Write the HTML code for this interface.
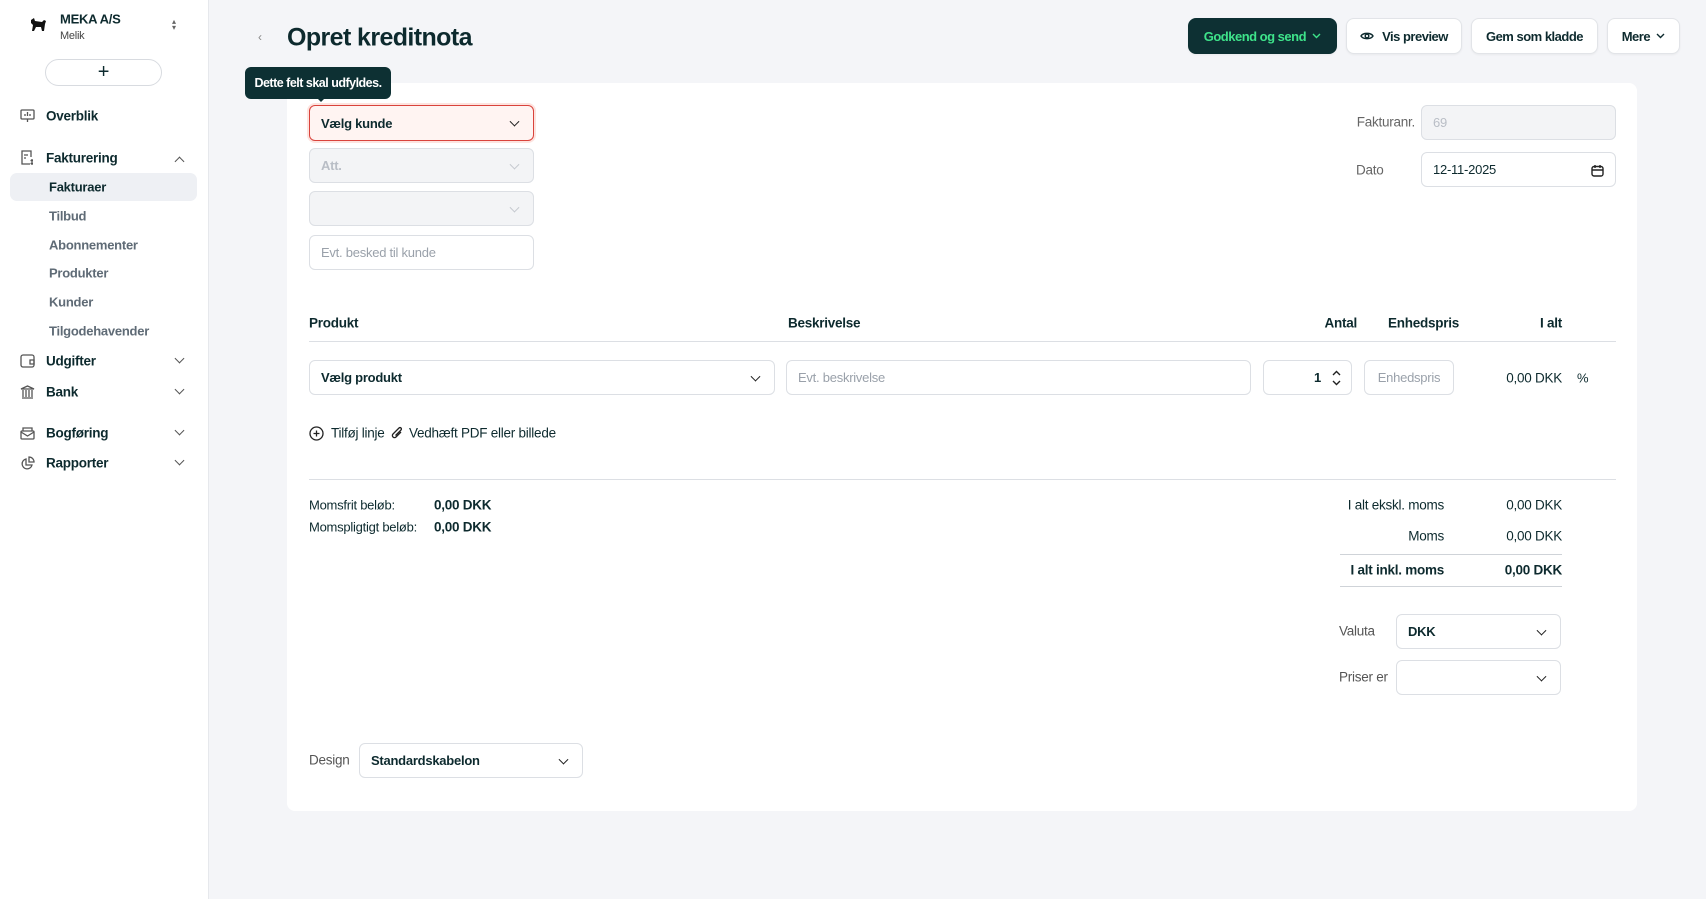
<!DOCTYPE html>
<html><head><meta charset="utf-8"><style>
*{box-sizing:border-box;margin:0;padding:0}
body{width:1706px;height:899px;background:#f4f5f8;font-family:"Liberation Sans",sans-serif;color:#0d2a2e;position:relative;overflow:hidden;font-size:13.5px;letter-spacing:-0.25px}
.a{position:absolute}
.side{position:absolute;left:0;top:0;width:209px;height:899px;background:#fff;border-right:1px solid #e6e8ec}
.nav{position:absolute;left:46px;font-weight:bold;font-size:13.5px;transform:translateY(-50%)}
.sub{position:absolute;left:49px;color:#5f6b76;font-weight:bold;font-size:13px;transform:translateY(-50%)}
.chev{position:absolute;left:176px;width:7px;height:7px;border-right:1.5px solid #555;border-bottom:1.5px solid #555;transform:rotate(45deg)}
.si{position:absolute;left:20px}
.card{position:absolute;left:287px;top:83px;width:1350px;height:728px;background:#fff;border-radius:8px}
.inp{position:absolute;border:1px solid #dcdfe4;border-radius:6px;background:#fff;display:flex;align-items:center;padding:0 11px;font-size:13px}
.dd::after{content:"";position:absolute;right:15px;top:50%;width:6px;height:6px;border-right:1.5px solid #222;border-bottom:1.5px solid #222;transform:translateY(-70%) rotate(45deg)}
.dis{background:#f3f4f6;color:#b9bec6}
.dis.dd::after{border-color:#c5c9cf}
.t{position:absolute;transform:translateY(-50%);white-space:nowrap}
.btn{position:absolute;top:18px;height:36px;border-radius:8px;background:#fff;border:1px solid #e2e4e8;display:flex;align-items:center;justify-content:center;font-weight:bold;font-size:13px;letter-spacing:-0.5px;box-shadow:0 1px 2px rgba(0,0,0,.05)}
</style></head><body>
<div class="side">
 <svg class="a" style="left:29px;top:17px" width="18" height="16" viewBox="0 0 18 16"><path d="M2 3 L5 1 L6 4 L13 5 L15 3 L17 4 L16 7 L15 14 L13 14 L12 10 L7 10 L5 14 L3 14 L4 8 L2 6 Z" fill="#111"/></svg>
 <div class="t" style="left:60px;top:19px;font-weight:bold;font-size:13px">MEKA A/S</div>
 <div class="t" style="left:60px;top:36px;font-size:11px;color:#444">Melik</div>
 <div class="t" style="left:172px;top:25px;font-size:8px;color:#666;line-height:6px">▴<br>▾</div>
 <div class="a" style="left:45px;top:59px;width:117px;height:27px;border:1px solid #d8dbe0;border-radius:14px;text-align:center;font-size:20px;line-height:24px">+</div>
 <svg class="si" style="top:109px" width="15" height="14" viewBox="0 0 15 14" fill="none" stroke="#555" stroke-width="1.3"><rect x="1" y="1" width="13" height="9" rx="1"/><path d="M5 7V5M7.5 7V3M10 7V5M7.5 10v3"/></svg>
 <div class="nav" style="top:116px">Overblik</div>
 <svg class="si" style="top:150px" width="15" height="16" viewBox="0 0 15 16" fill="none" stroke="#555" stroke-width="1.3"><path d="M10 14H2V1h9v6"/><path d="M4 5h4M4 8h2"/><path d="M12 9v6M10.5 10.5h2.5M10.5 13.5h2.5"/></svg>
 <div class="nav" style="top:158px">Fakturering</div>
 <div class="chev" style="top:158px;transform:rotate(-135deg)"></div>
 <div class="a" style="left:10px;top:173px;width:187px;height:28px;background:#eef0f4;border-radius:7px"></div>
 <div class="sub" style="top:187px;color:#0d2a2e">Fakturaer</div>
 <div class="sub" style="top:216px">Tilbud</div>
 <div class="sub" style="top:245px">Abonnementer</div>
 <div class="sub" style="top:273px">Produkter</div>
 <div class="sub" style="top:302px">Kunder</div>
 <div class="sub" style="top:331px">Tilgodehavender</div>
 <svg class="si" style="top:354px" width="15" height="14" viewBox="0 0 15 14" fill="none" stroke="#555" stroke-width="1.3"><rect x="1" y="1" width="13" height="12" rx="2"/><path d="M10 6h4v4h-4z"/></svg>
 <div class="nav" style="top:361px">Udgifter</div><div class="chev" style="top:355px"></div>
 <svg class="si" style="top:385px" width="15" height="14" viewBox="0 0 15 14" fill="none" stroke="#555" stroke-width="1.3"><path d="M1 4L7.5 1L14 4Z M2 13h11 M3 5v7M6 5v7M9 5v7M12 5v7"/></svg>
 <div class="nav" style="top:392px">Bank</div><div class="chev" style="top:386px"></div>
 <svg class="si" style="top:426px" width="15" height="14" viewBox="0 0 15 14" fill="none" stroke="#555" stroke-width="1.3"><rect x="1" y="5" width="13" height="8" rx="1"/><path d="M1 6l6.5 4L14 6M3 5V2h9v3"/></svg>
 <div class="nav" style="top:433px">Bogføring</div><div class="chev" style="top:427px"></div>
 <svg class="si" style="top:456px" width="15" height="15" viewBox="0 0 15 15" fill="none" stroke="#555" stroke-width="1.3"><path d="M6 3a5 5 0 1 0 6 6H6Z"/><path d="M9 1a5 5 0 0 1 5 5H9Z"/></svg>
 <div class="nav" style="top:463px">Rapporter</div><div class="chev" style="top:457px"></div>
</div>
<div class="t" style="left:258px;top:37px;color:#888;font-size:12px">‹</div>
<div class="t" style="left:287px;top:38px;font-size:25px;font-weight:bold;letter-spacing:-0.6px">Opret kreditnota</div>
<div class="btn" style="left:1188px;width:149px;background:#0d3033;border-color:#0d3033;color:#3ee38a">Godkend og send&nbsp;&nbsp;<svg width="9" height="6" viewBox="0 0 9 6"><path d="M1 1l3.5 3.5L8 1" fill="none" stroke="#3ee38a" stroke-width="1.4"/></svg></div>
<div class="btn" style="left:1346px;width:116px"><svg width="14" height="10" viewBox="0 0 14 10" style="margin-right:8px" fill="none" stroke="#0d2a2e" stroke-width="1.4"><path d="M1 5C3 1.5 11 1.5 13 5C11 8.5 3 8.5 1 5Z"/><circle cx="7" cy="5" r="1.8"/></svg>Vis preview</div>
<div class="btn" style="left:1471px;width:127px">Gem som kladde</div>
<div class="btn" style="left:1607px;width:73px">Mere&nbsp;&nbsp;<svg width="9" height="6" viewBox="0 0 9 6"><path d="M1 1l3.5 3.5L8 1" fill="none" stroke="#0d2a2e" stroke-width="1.4"/></svg></div>
<div class="card"></div>
<div class="a" style="left:245px;top:67px;width:146px;height:32px;background:#0d3033;border-radius:6px;color:#fff;font-size:12.5px;line-height:32px;text-align:center;font-weight:bold;letter-spacing:-.5px">Dette felt skal udfyldes.</div>
<div class="a" style="left:315px;top:96px;width:0;height:0;border:6px solid transparent;border-top-color:#0d3033"></div>
<div class="inp dd" style="left:309px;top:105px;width:225px;height:36px;border:1.5px solid #d9433c;background:#fff4f2;font-weight:bold;box-shadow:0 0 0 2px #fde3df">Vælg kunde</div>
<div class="inp dd dis" style="left:309px;top:148px;width:225px;height:35px;font-weight:bold">Att.</div>
<div class="inp dd dis" style="left:309px;top:191px;width:225px;height:35px"></div>
<div class="inp" style="left:309px;top:235px;width:225px;height:35px;color:#9aa1aa">Evt. besked til kunde</div>
<div class="t" style="right:291px;top:122px;color:#666">Fakturanr.</div>
<div class="inp dis" style="left:1421px;top:105px;width:195px;height:35px">69</div>
<div class="t" style="left:1356px;top:170px;color:#666">Dato</div>
<div class="inp" style="left:1421px;top:152px;width:195px;height:35px">12-11-2025<svg style="position:absolute;right:11px;top:11px" width="13" height="13" viewBox="0 0 13 13" fill="none" stroke="#222" stroke-width="1.4"><rect x="1" y="2.5" width="11" height="9.5" rx="2"/><path d="M4 1v3M9 1v3M1 6h11"/></svg></div>
<div class="t" style="left:309px;top:323px;font-weight:bold">Produkt</div>
<div class="t" style="left:788px;top:323px;font-weight:bold">Beskrivelse</div>
<div class="t" style="right:349px;top:323px;font-weight:bold">Antal</div>
<div class="t" style="left:1388px;top:323px;font-weight:bold">Enhedspris</div>
<div class="t" style="right:144px;top:323px;font-weight:bold">I alt</div>
<div class="a" style="left:309px;top:341px;width:1307px;height:1px;background:#dcdfe4"></div>
<div class="inp dd" style="left:309px;top:360px;width:466px;height:35px;font-weight:bold">Vælg produkt</div>
<div class="inp" style="left:786px;top:360px;width:465px;height:35px;color:#9aa1aa">Evt. beskrivelse</div>
<div class="inp" style="left:1263px;top:360px;width:89px;height:35px;justify-content:flex-end;padding-right:30px;font-weight:bold">1<svg style="position:absolute;right:10px;top:9px" width="9" height="16" viewBox="0 0 9 16" fill="none" stroke="#222" stroke-width="1.4"><path d="M1 5l3.5-3.5L8 5M1 11l3.5 3.5L8 11"/></svg></div>
<div class="inp" style="left:1364px;top:360px;width:90px;height:35px;color:#9aa1aa;justify-content:center">Enhedspris</div>
<div class="t" style="right:144px;top:378px">0,00 DKK</div>
<div class="t" style="left:1577px;top:378px;font-size:13px">%</div>
<svg class="a" style="left:309px;top:426px" width="15" height="15" viewBox="0 0 15 15" fill="none" stroke="#222" stroke-width="1.3"><circle cx="7.5" cy="7.5" r="6.5"/><path d="M7.5 4.5v6M4.5 7.5h6"/></svg>
<div class="t" style="left:331px;top:433px">Tilføj linje</div>
<svg class="a" style="left:391px;top:426px" width="13" height="14" viewBox="0 0 13 14" fill="none" stroke="#222" stroke-width="1.3"><path d="M10 6L5 11a2 2 0 0 1-3-3l6-6a1.3 1.3 0 0 1 2 2L4.5 9.5"/></svg>
<div class="t" style="left:409px;top:433px">Vedhæft PDF eller billede</div>
<div class="a" style="left:309px;top:479px;width:1307px;height:1px;background:#dcdfe4"></div>
<div class="t" style="left:309px;top:505px;font-size:13px">Momsfrit beløb:</div>
<div class="t" style="left:434px;top:505px;font-weight:bold">0,00 DKK</div>
<div class="t" style="left:309px;top:527px;font-size:13px">Momspligtigt beløb:</div>
<div class="t" style="left:434px;top:527px;font-weight:bold">0,00 DKK</div>
<div class="t" style="right:262px;top:505px">I alt ekskl. moms</div>
<div class="t" style="right:144px;top:505px">0,00 DKK</div>
<div class="t" style="right:262px;top:536px">Moms</div>
<div class="t" style="right:144px;top:536px">0,00 DKK</div>
<div class="a" style="left:1340px;top:554px;width:222px;height:1px;background:#cfd3d8"></div>
<div class="t" style="right:262px;top:570px;font-weight:bold">I alt inkl. moms</div>
<div class="t" style="right:144px;top:570px;font-weight:bold">0,00 DKK</div>
<div class="a" style="left:1340px;top:586px;width:222px;height:1px;background:#cfd3d8"></div>
<div class="t" style="left:1339px;top:631px;color:#555">Valuta</div>
<div class="inp dd" style="left:1396px;top:614px;width:165px;height:35px;font-weight:bold">DKK</div>
<div class="t" style="left:1339px;top:677px;color:#555">Priser er</div>
<div class="inp dd" style="left:1396px;top:660px;width:165px;height:35px"></div>
<div class="t" style="left:309px;top:760px;color:#555">Design</div>
<div class="inp dd" style="left:359px;top:743px;width:224px;height:35px;font-weight:bold">Standardskabelon</div>
</body></html>
